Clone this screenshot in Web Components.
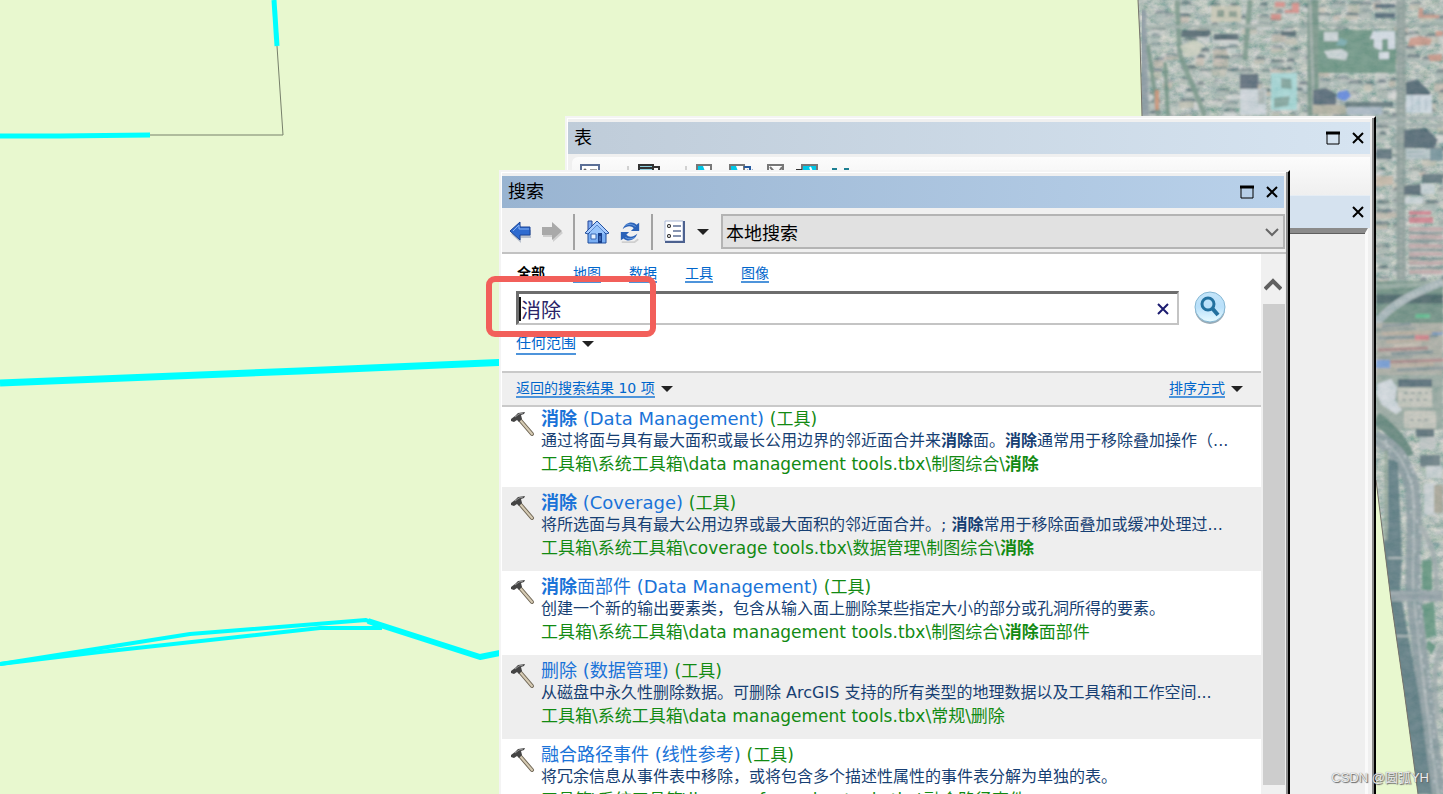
<!DOCTYPE html>
<html lang="zh-CN">
<head>
<meta charset="UTF-8">
<title>搜索</title>
<style>
  html, body {
    height: 100%;
    margin: 0;
  }

  body {
    position: relative;
    overflow: hidden;
    font-family: "DejaVu Sans", "Noto Sans CJK SC", sans-serif;
    color: #000;
  }

  map-canvas {
    position: absolute;
    inset: 0;
  }

  tool-window {
    position: absolute;
    bottom: 0;
  }

  .win-tabla {
    top: 116px;
    left: 565px;
    right: 67px;
    --bar-from: #bfccd9;
    --bar-to: #d6e4f1;
  }

  .win-buscar {
    top: 170px;
    left: 499px;
    right: 153px;
    --bar-from: #99b4d1;
    --bar-to: #b9d1ea;
  }

  .marca {
    position: absolute;
    top: 276px;
    left: 486px;
    width: 170px;
    height: 61px;
    box-sizing: border-box;
    border: 6px solid #f25f5a;
    border-radius: 9px;
    pointer-events: none;
  }

  .agua {
    position: absolute;
    right: 14px;
    bottom: 7px;
    font: 13px/18px "Liberation Sans", "Noto Sans CJK SC", sans-serif;
    color: #ededed;
    text-shadow: 1px 1px 1px #666, 0 0 1px #666;
  }
</style>
</head>
<body>
  <map-canvas></map-canvas>

  <tool-window class="win-tabla" titulo="表">
    <table-panel></table-panel>
  </tool-window>

  <tool-window class="win-buscar" titulo="搜索">
    <search-toolbar></search-toolbar>
    <search-panel>
      <result-item>
        <span slot="titulo"><b>消除</b> (Data Management)</span>
        <span slot="texto">通过将面与具有最大面积或最长公用边界的邻近面合并来<b>消除</b>面。<b>消除</b>通常用于移除叠加操作（...</span>
        <span slot="ruta">工具箱\系统工具箱\data management tools.tbx\制图综合\<b>消除</b></span>
      </result-item>
      <result-item>
        <span slot="titulo"><b>消除</b> (Coverage)</span>
        <span slot="texto">将所选面与具有最大公用边界或最大面积的邻近面合并。; <b>消除</b>常用于移除面叠加或缓冲处理过...</span>
        <span slot="ruta">工具箱\系统工具箱\coverage tools.tbx\数据管理\制图综合\<b>消除</b></span>
      </result-item>
      <result-item>
        <span slot="titulo"><b>消除</b>面部件 (Data Management)</span>
        <span slot="texto">创建一个新的输出要素类，包含从输入面上删除某些指定大小的部分或孔洞所得的要素。</span>
        <span slot="ruta">工具箱\系统工具箱\data management tools.tbx\制图综合\<b>消除</b>面部件</span>
      </result-item>
      <result-item>
        <span slot="titulo">删除 (数据管理)</span>
        <span slot="texto">从磁盘中永久性删除数据。可删除 ArcGIS 支持的所有类型的地理数据以及工具箱和工作空间...</span>
        <span slot="ruta">工具箱\系统工具箱\data management tools.tbx\常规\删除</span>
      </result-item>
      <result-item>
        <span slot="titulo">融合路径事件 (线性参考)</span>
        <span slot="texto">将冗余信息从事件表中移除，或将包含多个描述性属性的事件表分解为单独的表。</span>
        <span slot="ruta">工具箱\系统工具箱\linear referencing tools.tbx\融合路径事件</span>
      </result-item>
    </search-panel>
  </tool-window>

  <div class="marca"></div>
  <div class="agua">CSDN @圆弧YH</div>

<script>
const TECHOS = ["#c9cdca", "#bcc4c0", "#d0d3d4", "#c2bfb2", "#aab6b2", "#c2b7aa", "#a5b4b0"];

// Small seeded generator so the city blocks are always the same
function crearAzar(semilla) {
  let s = semilla;
  return () => {
    s = (s * 1664525 + 1013904223) % 4294967296;
    return s / 4294967296;
  };
}

class MapCanvas extends HTMLElement {
  constructor() {
    super();
    this.attachShadow({ mode: "open" });
  }

  connectedCallback() {
    this._render();
  }

  _edificios() {
    const azar = crearAzar(77);
    let out = "";
    for (let y = 2; y < 290; y += 11) {
      for (let x = 1148; x < 1443; x += 15) {
        if (azar() < 0.28) continue;
        const w = Math.round(6 + azar() * 9);
        const h = Math.round(3 + azar() * 5);
        const px = Math.round(x + azar() * 7);
        const py = Math.round(y + azar() * 6);
        const techo = TECHOS[Math.floor(azar() * TECHOS.length)];
        const sombra = (0.2 + azar() * 0.5).toFixed(2);
        out += `<path d="M${px} ${py}l3 -4h${w - 3}l2 4z" fill="#455a66" opacity="${sombra}"/>`;
        out += `<rect x="${px}" y="${py}" width="${w}" height="${h}" fill="${techo}" opacity=".85"/>`;
      }
    }
    return out;
  }

  _vias() {
    const azar = crearAzar(9);
    const tonos = ["#b8a99a", "#8c9895", "#c3b9ad", "#a77f80", "#7d8d92"];
    let out = "";
    for (let y = 326; y < 374; y += 4) {
      const x = 1376 + Math.round(azar() * 25);
      out += `<path d="M${x} ${y}L${x + 25 + Math.round(azar() * 40)} ${y - 2}" stroke="${tonos[Math.floor(azar() * 5)]}" stroke-width="3"/>`;
    }
    return out;
  }

  _autos() {
    const azar = crearAzar(31);
    let out = "";
    for (let y = 440; y < 794; y += 5) {
      const base = y < 480 ? 1376 + (y - 432) * 0.7 : 1406 + (y - 480) * 0.08;
      const x = Math.round(base + azar() * 14);
      out += `<rect x="${x}" y="${y}" width="2" height="3" fill="#c5cdd3" opacity=".7"/>`;
    }
    return out;
  }

  _render() {
    this.shadowRoot.innerHTML = `
      <style>
        :host {
          display: block;
          background: #e8f8cf;
        }

        svg {
          display: block;
          width: 100%;
          height: 100%;
        }
      </style>
      <svg viewBox="0 0 1443 794" preserveAspectRatio="xMinYMin slice" fill="none" aria-hidden="true">
        <defs>
          <clipPath id="zona">
            <path d="M1138 0L1140 40L1142 116V200L1376 480L1386 560L1391 600L1404 690L1418 794H1443V0Z"/>
          </clipPath>
          <filter id="grano" x="0" y="0" width="100%" height="100%">
            <feTurbulence type="fractalNoise" baseFrequency=".1 .14" numOctaves="4" seed="8"/>
            <feColorMatrix values=".9 0 0 0 .09  .6 .1 0 0 .25  .6 0 .1 0 .22  0 0 0 0 1"/>
          </filter>
          <filter id="suave" x="0" y="0" width="100%" height="100%"><feGaussianBlur stdDeviation=".9"/></filter>
        </defs>

        <g clip-path="url(#zona)">
          <rect x="1138" width="305" height="794" fill="#849b90"/>
          <rect x="1138" width="305" height="794" filter="url(#grano)" opacity=".7"/>
          <g filter="url(#suave)">
            ${this._edificios()}
            <path d="M1142 10L1145 116" stroke="#8997a0" stroke-width="8"/>
            <path d="M1148 45L1158 116M1165 62L1168 116" stroke="#6f9082" stroke-width="4"/>
            <path d="M1157 90V110" stroke="#c88b6c" stroke-width="4"/>
            <path d="M1177 0L1180 55L1205 116M1250 0L1245 60" stroke="#789588" stroke-width="5"/>
            <path d="M1145 27L1443 24" stroke="#9dada7" stroke-width="3"/>
            <path d="M1318 30H1396V73H1318Z" fill="#66907f"/>
            <path d="M1324 32h14v9h-14zM1324 51l18-2 6 4-2 7-18-2z" fill="#cdd5d9"/>
            <path d="M1340 38l8 3-4 5-8-1z" fill="#72a8ad"/>
            <path d="M1373 31h22v18h-7v-10h-6v12l-8-4v-8h-4zM1379 52h10v7h-10z" fill="#d5dde7"/>
            <path d="M1313 0V116" stroke="#6f8f82" stroke-width="11"/>
            <path d="M1310 0L1314 116" stroke="#9baaa5" stroke-width="3"/>
            <path d="M1182 30h29l-2 7h-28zM1281 31h15v5h-15zM1214 34h22l3 6h-25z" fill="#4b606b"/>
            <path d="M1271 14h10v6h-10zM1275 2h10v5h-10zM1292 3h7v10h-14v-3h7z" fill="#d98983"/>
            <path d="M1211 6h30v16h-30z" fill="#c7c6b3"/><path d="M1217 10h7v7h-7zM1229 11h8v6h-8z" fill="#819487"/>
            <path d="M1240 74h18v18h-18z" fill="#566573"/>
            <path d="M1240 89h26v26h-26z" fill="#ccd4db"/>
            <path d="M1258 90h7v14h-7z" fill="#aeb6b6"/>
            <path d="M1271 73h26v37h-26z" fill="#a2d7d7"/>
            <path d="M1281 78l10 1 1 10-11-1zM1274 98l16-2-2 10-14 2z" fill="#799f98"/>
            <path d="M1180 46l14-6 10 5-6 10-12 2z" fill="#cbcfbe"/>
            <path d="M1313 90l13-2 10 6v11h-23z" fill="#4d6170"/>
            <path d="M1313 105h33v9h-33z" fill="#b3b0a0"/>
            <path d="M1338 92l9-2 4 6-6 5-8-3z" fill="#5b83e2"/>
            <path d="M1345 102h48v5h-48z" fill="#5a6f76"/>
            <path d="M1347 107h35v8h-35z" fill="#a5b5c3"/>
            <path d="M1375 4h20v4h-20zM1375 13h20v5h-20z" fill="#4a6170"/>
            <path d="M1401 0V280" stroke="#899a96" stroke-width="9"/>
            <path d="M1401 0V280" stroke="#b4bdba" stroke-width="1" stroke-dasharray="2 3"/>
            <path d="M1376 123L1443 126M1376 118H1443" stroke="#9ba9a8" stroke-width="3"/>
            <path d="M1410 38l10-2 12 3-2 6-22 1zM1419 8h4v7h16v3h-21zM1436 31h7v5h-7zM1428 55l14-1v7h-12z" fill="#ca9383"/>
            <path d="M1406 82l12-2 12 12v4h-24z" fill="#455b69"/>
            <path d="M1406 95h26v18h-26z" fill="#ccd8e2"/>
            <path d="M1412 97v14M1419 96v16M1426 98v13" stroke="#9fb2c1"/>
            <path d="M1404 130l22-2 12 12-4 8h-30z" fill="#4a5f6c"/>
            <path d="M1406 149h24v10h-24z" fill="#bac8cd"/>
            <path d="M1408 152h16M1408 156h18" stroke="#8499a2"/>
            <path d="M1430 149h13v12h-13z" fill="#6b8b95"/>
            <path d="M1404 186l16-2 4 11h-20z" fill="#4b606c"/>
            <path d="M1421 184h14v10h-14zM1405 197h18v7h-18z" fill="#c9d3d8"/>
            <path d="M1422 174h21v9h-21z" fill="#5a6f78"/>
            <path d="M1376 149h16v10h-16z" fill="#556a74"/>
            <path d="M1376 176h17v9h-17z" fill="#c5b5a5"/>
            <path d="M1409 211h22v4h-22zM1409 217h24v6h-24z" fill="#d27c8a"/>
            <path d="M1409 229h34M1409 237h34M1409 246h34M1409 254h34M1409 263h34M1409 272h34" stroke="#c1a6a7" stroke-width="4"/>
            <path d="M1409 233h34M1409 241h34M1409 250h34M1409 259h34M1409 268h34" stroke="#7b898d" stroke-width="2"/>
            <path d="M1376 281H1443V323H1376Z" fill="#67897d"/>
            <path d="M1376 287L1443 283" stroke="#8fa59b" stroke-width="5"/>
            <path d="M1376 299H1443" stroke="#3f5b60" stroke-width="9"/>
            <path d="M1374 326C1390 305 1412 293 1443 282" stroke="#a5b3b8" stroke-width="8"/>
            <path d="M1374 326C1390 305 1412 293 1443 282" stroke="#d8dedf" stroke-dasharray="2 3"/>
            <path d="M1416 314h14v4h-15z" fill="#55b789"/>
            <path d="M1376 323H1443V375H1376Z" fill="#a9aaa2"/>
            ${this._vias()}
            <path d="M1415 335h14v5h-14z" fill="#ce7780"/><path d="M1432 332h11v3h-11z" fill="#7797bd"/>
            <path d="M1376 360h14v8h-14z" fill="#7199d8"/>
            <path d="M1376 375H1443V430H1376Z" fill="#95a69e"/>
            <path d="M1377 384l14-5 6 8-2 13 7 10-6 4-14-9-6-12z" fill="#d0d7de"/>
            <path d="M1398 379h34v8h-34z" fill="#4e6470"/>
            <path d="M1398 388h34v19h-34zM1404 411h32v17h-32z" fill="#c5c5bc"/>
            <path d="M1404 393h24M1402 400h28M1410 420h20" stroke="#8e9b99" stroke-width="2" stroke-dasharray="4 3"/>
            <path d="M1416 429h18v8h-18z" fill="#51666f"/><path d="M1420 437h16v12h-16z" fill="#bec4c4"/>
            <path d="M1420 455h20v12h-20z" fill="#5f747c"/><path d="M1426 466h16v12h-16zM1424 483h12v32h-12z" fill="#cbd1d5"/>
            <path d="M1434 485h9v28h-9z" fill="#a5a294"/>
            <path d="M1376 418C1390 428 1402 442 1408 456" stroke="#5a7f75" stroke-width="12"/>
            <path d="M1374 438C1392 444 1404 458 1412 486C1418 530 1410 560 1414 598C1420 660 1430 730 1438 794" stroke="#87989e" stroke-width="15"/>
            <path d="M1374 438C1392 444 1404 458 1412 486C1418 530 1410 560 1414 598C1420 660 1430 730 1438 794" stroke="#a9b4b8" stroke-width="2"/>
            ${this._autos()}
            <path d="M1420 525C1432 545 1437 555 1437 600M1443 645C1432 660 1434 690 1438 720" stroke="#9ca8aa" stroke-width="5"/>
            <path d="M1422 560h10v30h-10zM1422 605l12-4 2 34-10 4zM1428 640l8 6-4 8-6-6z" fill="#5b907a"/>
            <path d="M1388 458L1398 462L1402 558L1400 590L1420 700L1432 794H1412L1376 560L1388 530Z" fill="#55757d"/>
            <path d="M1386 450V540" stroke="#8aa093" stroke-width="3"/>
            <path d="M1388 558L1406 558M1396 636H1412" stroke="#a8b4b5" stroke-width="2"/>
            <path d="M1388 596H1443" stroke="#86959d" stroke-width="11"/>
            <path d="M1388 593H1443M1388 600H1443" stroke="#adb5ba"/>
          </g>
          <rect x="1138" width="305" height="794" filter="url(#grano)" opacity=".2"/>
        </g>

        <path d="M1138 0L1140 40L1142 116M1376 480L1386 560L1391 600L1404 690L1418 794" stroke="#77746c" stroke-width="1"/>
        <path d="M277 46L283 135H150" stroke="#77806b" stroke-width="1"/>
        <g stroke="#00ffff" stroke-linejoin="round">
          <path d="M274 0L277 46" stroke-width="5"/>
          <path d="M0 136H60L150 135" stroke-width="5"/>
          <path d="M0 383L300 371L510 362" stroke-width="7"/>
          <path d="M0 664L190 634L366 620L380 627" stroke-width="4"/>
          <path d="M0 664L100 652L320 628H382" stroke-width="4"/>
          <path d="M368 621L480 657L510 651" stroke-width="6"/>
        </g>
      </svg>
    `;
  }
}

class ToolWindow extends HTMLElement {
  constructor() {
    super();
    this.attachShadow({ mode: "open" });
  }

  connectedCallback() {
    this.shadowRoot.innerHTML = `
      <style>
        :host {
          display: flex;
          flex-direction: column;
          box-sizing: border-box;
          overflow: hidden;
          padding: 4px 2px 0 1px;
          background: #f0f0f0;
          border-top: 2px solid #f4f4f4;
          border-left: 2px solid #f4f4f4;
          border-right: 2px solid #000;
          box-shadow: inset -2px 0 0 #8a8a8a, inset 1px 1px 0 #fff;
        }

        header {
          display: flex;
          align-items: center;
          flex: none;
          height: 32px;
          padding: 0 0 0 6px;
          margin-right: 2px;
          background: linear-gradient(90deg, var(--bar-from), var(--bar-to));
        }

        h2 {
          flex: 1;
          margin: 0;
          font-size: 18px;
          line-height: 32px;
          font-weight: 400;
        }

        button {
          display: grid;
          place-items: center;
          width: 25px;
          height: 24px;
          padding: 0;
          border: 0;
          background: none;
        }
      </style>
      <header>
        <h2></h2>
        <button type="button" aria-label="最大化">
          <svg width="16" height="16" fill="none" stroke="#000"><path d="M1 3H15" stroke-width="3"/><path d="M2 2V14H14V2" stroke-width="1"/></svg>
        </button>
        <button type="button" aria-label="关闭">
          <svg width="14" height="14" fill="none" stroke="#000" stroke-width="2"><path d="M2 2L12 12M12 2L2 12"/></svg>
        </button>
      </header>
      <slot></slot>
    `;
    this.shadowRoot.querySelector("h2").textContent = this.getAttribute("titulo");
  }
}

class TablePanel extends HTMLElement {
  constructor() {
    super();
    this.attachShadow({ mode: "open" });
  }

  connectedCallback() {
    this.shadowRoot.innerHTML = `
      <style>
        :host {
          display: flex;
          flex-direction: column;
          flex: 1;
          margin-right: 2px;
        }

        .barra {
          display: flex;
          height: 31px;
          margin-top: 3px;
          margin-left: 4px;
          padding: 7px 8px 0;
          border-radius: 6px 0 0 0;
          background: linear-gradient(#fcfcfc, #efefef);
        }

        .pestana {
          display: flex;
          align-items: center;
          justify-content: flex-end;
          height: 32px;
          background: #d5e2ef;
          border-top: 1px solid #e6edf4;
        }

        button {
          display: grid;
          place-items: center;
          width: 25px;
          height: 24px;
          padding: 0;
          border: 0;
          background: none;
        }

        .cuerpo {
          flex: 1;
          margin-right: 2px;
          border-top: 5px solid #8b8b8b;
          border-right: 3px solid #fafafa;
          background: #efefef;
          box-shadow: inset 0 1px 0 #5f5f5f;
        }
      </style>
      <div class="barra">
        <svg width="280" height="24" fill="none" stroke="#333" stroke-width="2">
          <path d="M1 1h18v20H1z" fill="#fff" stroke="#5b6f96"/><path d="M10 6h7" stroke-width="1"/><circle cx="5" cy="6" r="1" stroke-width="1"/>
          <path d="M48 2v18M106 2v18" stroke="#aaa" stroke-width="1"/>
          <path d="M59 1h14v16H59z" fill="#8fd0e0"/><path d="M59 4h14M73 3h6v14"/>
          <path d="M117 1h14v18h-14z" fill="#fff" stroke="#777"/><path d="M118 2h5l6 16h-11z" fill="#00c8e8" stroke="none"/>
          <path d="M150 1h14v18h-14z" fill="#fff" stroke="#777"/><path d="M151 2h5l6 16h-11z" fill="#00c8e8" stroke="none"/><path d="M164 3h6v5m-3-2l3 3 3-3" stroke="#255aa0"/>
          <path d="M188 1h15v18h-15zM190 3l7 8 5-8" fill="#fff" stroke="#777"/>
          <path d="M222 1h15v18h-15z" fill="#00c8e8" stroke="#777"/><path d="M230 3l5 12" stroke="#fff"/><path d="M216 6h6"/>
          <path d="M252 6h5M264 6h5" stroke="#1d7f92" stroke-width="4"/>
        </svg>
      </div>
      <div class="pestana">
        <button type="button" aria-label="关闭">
          <svg width="14" height="14" fill="none" stroke="#000" stroke-width="2"><path d="M2 2L12 12M12 2L2 12"/></svg>
        </button>
      </div>
      <div class="cuerpo"></div>
    `;
  }
}

class SearchToolbar extends HTMLElement {
  constructor() {
    super();
    this.attachShadow({ mode: "open" });
  }

  connectedCallback() {
    this.shadowRoot.innerHTML = `
      <style>
        :host {
          display: flex;
          align-items: center;
          flex: none;
          height: 46px;
          padding: 3px 1px 0 2px;
          box-sizing: border-box;
          border-bottom: 2px solid #c2c2c2;
        }

        button {
          display: grid;
          place-items: center;
          width: 32px;
          height: 36px;
          padding: 0;
          border: 0;
          background: none;
        }

        .menu {
          width: 22px;
          margin-right: 7px;
        }

        .sep {
          width: 2px;
          height: 36px;
          margin: 0 5px;
          background: #a3a3a3;
        }

        .sep + button {
          width: 34px;
        }

        .lista {
          position: relative;
          display: flex;
          flex: 1;
        }

        select {
          appearance: none;
          width: 100%;
          height: 35px;
          padding: 4px 3px 0;
          border: 2px solid #b4b4b4;
          border-radius: 0;
          background: #e1e1e1;
          font: inherit;
          font-size: 18px;
          color: #000;
        }

        .lista svg {
          position: absolute;
          right: 6px;
          top: 13px;
          pointer-events: none;
        }
      </style>
      <button type="button" aria-label="后退">
        <svg width="24" height="24"><path d="M2 12L12 3V8H22V16H12V21Z" fill="#b9c0cc" transform="translate(1 2)"/><path d="M2 11L12 2V7H22V15H12V20Z" fill="#2f6bd0" stroke="#1b4598"/><path d="M5 11L11 5V9H21" fill="none" stroke="#86b2f2"/></svg>
      </button>
      <button type="button" aria-label="前进">
        <svg width="24" height="24"><path d="M22 12L12 3V8H2V16H12V21Z" fill="#cfcfcf" transform="translate(1 1)"/><path d="M22 11L12 2V7H2V15H12V20Z" fill="#a9a9a9"/></svg>
      </button>
      <span class="sep"></span>
      <button type="button" aria-label="主页">
        <svg width="26" height="26"><path d="M4 13V24H22V13L13 4Z" fill="#79aef3" stroke="#1f4c9c"/><path d="M4 2H8V8L4 12Z" fill="#7eaaf0" stroke="#24479a"/><path d="M1 14L13 2L25 14L22 15L13 6L4 15Z" fill="#a8ccff" stroke="#24519f"/><path d="M13 6L6 13V15H20V13Z" fill="#96c3fb"/><path d="M14 14H18V24H14Z" fill="#173f8c"/><path d="M16 17V22" stroke="#5f8ad3"/><path d="M7 15H12V20H7Z" fill="#e7f2ff" stroke="#3b68b5"/></svg>
      </button>
      <button type="button" aria-label="刷新">
        <svg width="22" height="24" viewBox="0 0 24 24"><path d="M3 23H17L21 20" fill="none" stroke="#cfcfcf" stroke-width="2"/><path d="M4 9C7 1 15 0 19 4L22 2V11H13L16 8C13 5 9 5 4 9Z" fill="#2b62b8"/><path d="M7 5C10 3 14 3 18 6" fill="none" stroke="#6fa2e6"/><path d="M20 14C17 22 9 23 5 19L2 21V12H11L8 15C11 18 15 18 20 14Z" fill="#2b62b8"/><path d="M7 18C10 20 14 20 17 18" fill="none" stroke="#6fa2e6"/></svg>
      </button>
      <span class="sep"></span>
      <button type="button" aria-label="选项">
        <svg width="22" height="24" fill="none"><path d="M1 1H19V21H1Z" fill="#fff" stroke="#a8b7d6"/><path d="M20 1V22H1" stroke="#4c618f" stroke-width="2"/><circle cx="5" cy="6" r="2" fill="#222"/><circle cx="5" cy="6" r="1" fill="#fff"/><circle cx="5" cy="16" r="2" fill="#222"/><circle cx="5" cy="16" r="1" fill="#fff"/><path d="M9 6H17M9 11H17M9 16H17" stroke="#8693b0" stroke-width="2"/></svg>
      </button>
      <button type="button" class="menu" aria-label="选项菜单">
        <svg width="12" height="8"><path d="M0 1H12L6 7Z" fill="#222"/></svg>
      </button>
      <div class="lista">
        <select aria-label="搜索位置"><option>本地搜索</option></select>
        <svg width="14" height="10" fill="none" stroke="#666" stroke-width="2"><path d="M1 2L7 8L13 2"/></svg>
      </div>
    `;
  }
}

class SearchPanel extends HTMLElement {
  constructor() {
    super();
    this.attachShadow({ mode: "open" });
  }

  connectedCallback() {
    this.shadowRoot.innerHTML = `
      <style>
        :host {
          display: flex;
          flex: 1;
          min-height: 0;
        }

        main {
          display: flex;
          flex-direction: column;
          flex: 1;
          min-width: 0;
          overflow: hidden;
          background: #fff;
        }

        a {
          color: #0066cc;
          text-decoration: none;
          border-bottom: 2px solid #4d94db;
        }

        nav {
          display: flex;
          gap: 28px;
          padding: 11px 15px 0;
          font-size: 14px;
          line-height: 16px;
        }

        nav a[aria-current] {
          color: #000;
          font-weight: 700;
          border: 0;
        }

        form {
          display: flex;
          align-items: center;
          gap: 14px;
          padding: 8px 34px 0 14px;
        }

        .caja {
          display: flex;
          align-items: center;
          flex: 1;
          height: 34px;
          box-sizing: border-box;
          border: 2px solid #c4c4c4;
          border-top: 3px solid #6d6d6d;
          border-left: 3px solid #6d6d6d;
        }

        .cursor {
          width: 2px;
          height: 24px;
          background: #111;
        }

        input {
          flex: 1;
          min-width: 0;
          height: 28px;
          padding: 2px 0 0;
          box-sizing: border-box;
          border: 0;
          outline: 0;
          font: inherit;
          font-size: 20px;
          color: #2a2468;
          background: none;
        }

        button {
          display: grid;
          place-items: center;
          padding: 0;
          border: 0;
          background: none;
        }

        .limpiar {
          width: 28px;
          height: 28px;
        }

        .alcance {
          display: flex;
          align-items: center;
          gap: 6px;
          padding: 8px 14px 16px;
          font-size: 15px;
          line-height: 20px;
        }

        .resumen {
          display: flex;
          align-items: center;
          gap: 6px;
          flex: none;
          height: 36px;
          box-sizing: border-box;
          padding: 0 18px 0 14px;
          background: #efefef;
          border-top: 2px solid #c9c9c9;
          border-bottom: 2px solid #c9c9c9;
          font-size: 14px;
          line-height: 16px;
        }

        .orden {
          margin-left: auto;
        }

        .lista {
          margin-top: -4px;
        }

        ::slotted(result-item:nth-child(even)) {
          background: #eee;
        }

        aside {
          display: flex;
          flex-direction: column;
          width: 24px;
          margin-right: 1px;
          background: #f0f0f0;
        }

        aside button {
          height: 50px;
          padding-top: 10px;
        }

        .pulgar {
          flex: 1;
          margin: 0 0 9px 2px;
          background: #cdcdcd;
        }
      </style>
      <main>
        <nav>
          <a href="#" aria-current="page">全部</a>
          <a href="#">地图</a>
          <a href="#">数据</a>
          <a href="#">工具</a>
          <a href="#">图像</a>
        </nav>
        <form>
          <div class="caja">
            <span class="cursor"></span>
            <input type="text" aria-label="搜索" value="消除">
            <button type="button" class="limpiar" aria-label="清除">
              <svg width="14" height="14" fill="none" stroke="#1c1c70" stroke-width="2"><path d="M2 2L12 12M12 2L2 12"/></svg>
            </button>
          </div>
          <button type="submit" aria-label="搜索">
            <svg width="34" height="34" fill="none">
              <defs><linearGradient id="g" x2="0" y2="1"><stop stop-color="#c4e5fa"/><stop offset=".5" stop-color="#b9e0fa"/><stop offset="1" stop-color="#e8fbff"/></linearGradient></defs>
              <circle cx="17" cy="18" r="15" fill="#9aabb6"/>
              <circle cx="17" cy="16" r="15" fill="url(#g)" stroke="#86b7d3"/>
              <circle cx="15" cy="13" r="6" stroke="#23719f" stroke-width="3"/>
              <path d="M19 17L25 24" stroke="#23719f" stroke-width="4"/>
            </svg>
          </button>
        </form>
        <div class="alcance">
          <a href="#">任何范围</a>
          <svg width="12" height="8"><path d="M0 1H12L6 7Z" fill="#222"/></svg>
        </div>
        <div class="resumen">
          <a href="#">返回的搜索结果 10 项</a>
          <svg width="12" height="8"><path d="M0 1H12L6 7Z" fill="#222"/></svg>
          <a href="#" class="orden">排序方式</a>
          <svg width="12" height="8"><path d="M0 1H12L6 7Z" fill="#222"/></svg>
        </div>
        <div class="lista"><slot></slot></div>
      </main>
      <aside>
        <button type="button" aria-label="向上滚动">
          <svg width="18" height="14" fill="none" stroke="#606060" stroke-width="4"><path d="M1 12L9 4L17 12"/></svg>
        </button>
        <div class="pulgar"></div>
      </aside>
    `;
    this.shadowRoot.querySelector("form").addEventListener("submit", (e) => e.preventDefault());
    this.shadowRoot.querySelector(".limpiar").addEventListener("click", () => {
      this.shadowRoot.querySelector("input").value = "";
    });
  }
}

class ResultItem extends HTMLElement {
  constructor() {
    super();
    this.attachShadow({ mode: "open" });
  }

  connectedCallback() {
    this.shadowRoot.innerHTML = `
      <style>
        :host {
          display: grid;
          grid-template-columns: 26px 1fr;
          gap: 5px;
          height: 84px;
          box-sizing: border-box;
          padding: 5px 8px 11px;
        }

        svg {
          margin-top: 3px;
        }

        .cuerpo {
          min-width: 0;
          white-space: nowrap;
        }

        .titulo {
          font-size: 18px;
          line-height: 22px;
        }

        a {
          color: #1a73d8;
          text-decoration: none;
        }

        .tipo {
          font-size: 17px;
          color: #128a12;
        }

        .texto {
          font-size: 16px;
          line-height: 22px;
          color: #173f73;
        }

        .ruta {
          font-size: 17px;
          line-height: 24px;
          color: #128a12;
        }
      </style>
      <svg width="26" height="26" fill="none">
        <path d="M10 9L22 23" stroke="#6f6655" stroke-width="4" stroke-linecap="round"/>
        <path d="M10 9L22 23" stroke="#d6cbb4" stroke-width="2" stroke-linecap="round"/>
        <path d="M1 8L5 5L8 2L15 1L14 3L11 4L12 8L9 11L7 9L4 11L1 10Z" fill="#444"/>
        <path d="M5 6L9 3L13 2" stroke="#999"/>
      </svg>
      <div class="cuerpo">
        <div class="titulo"><a href="#"><slot name="titulo"></slot></a> <span class="tipo">(工具)</span></div>
        <div class="texto"><slot name="texto"></slot></div>
        <div class="ruta"><slot name="ruta"></slot></div>
      </div>
    `;
  }
}

customElements.define("map-canvas", MapCanvas);
customElements.define("tool-window", ToolWindow);
customElements.define("table-panel", TablePanel);
customElements.define("search-toolbar", SearchToolbar);
customElements.define("search-panel", SearchPanel);
customElements.define("result-item", ResultItem);
</script>
</body>
</html>
